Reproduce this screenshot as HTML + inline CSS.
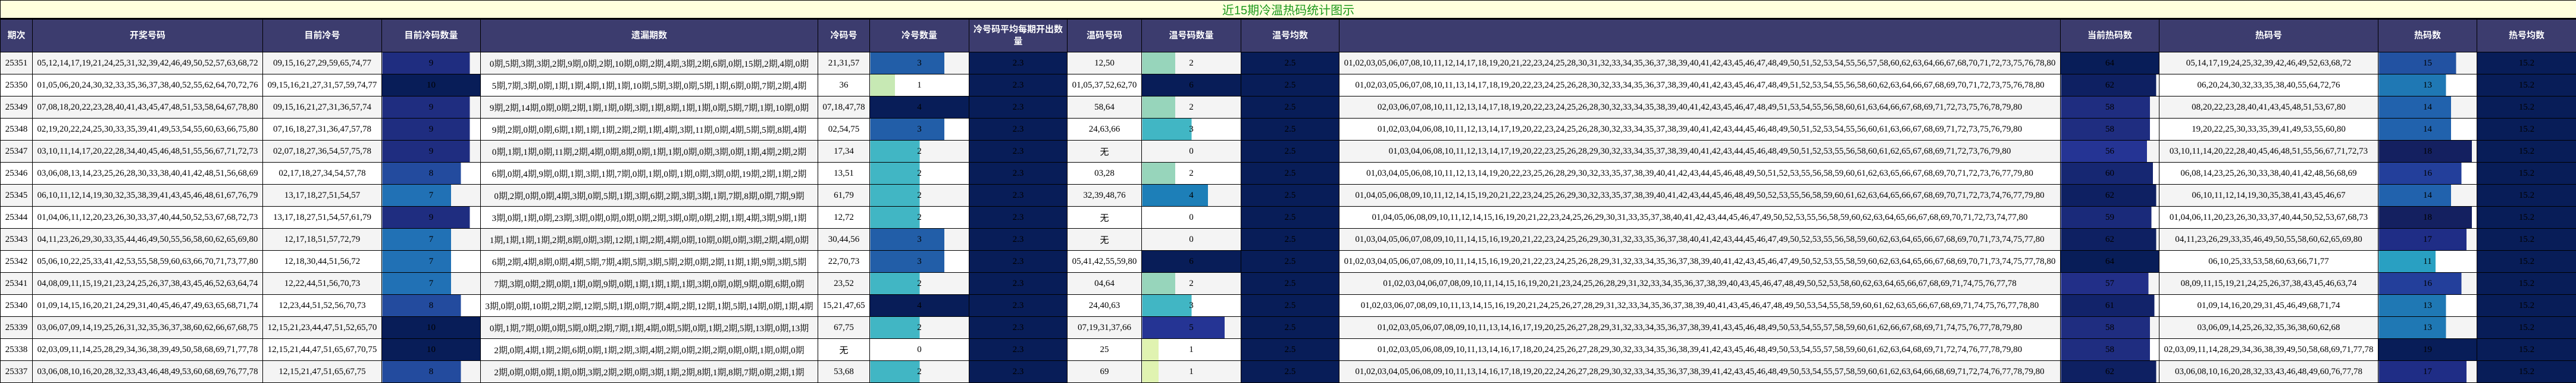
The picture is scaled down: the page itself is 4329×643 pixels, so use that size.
<!DOCTYPE html>
<html><head><meta charset="utf-8">
<style>
html,body{margin:0;padding:0;background:#fff;}
body{width:4329px;height:639px;overflow:hidden;}
table{border-collapse:collapse;table-layout:fixed;width:4329px;font-family:"Liberation Serif","Noto Serif CJK SC",serif;font-size:15px;color:#000;}
td,th{border:1px solid #000;padding:0;text-align:center;white-space:nowrap;overflow:hidden;}
tr.t td{height:25px;background:#ffffdd;color:#1e9a1e;font-size:20px;border-bottom:3px solid #000;font-family:"Liberation Sans","Noto Sans CJK SC",sans-serif;}
tr.h th{height:54px;background:#3c3c6e;color:#fff;font-family:"Liberation Sans","Noto Sans CJK SC",sans-serif;font-weight:bold;font-size:15px;white-space:normal;line-height:20px;}
tr.r td{height:36px;}
tr.o{background:#f4f4f4;}
tr.e{background:#fff;}
td.d{background:#081d58;}
</style></head><body>
<table>
<colgroup>
<col style="width:54px"><col style="width:387px"><col style="width:200px"><col style="width:166px"><col style="width:567px"><col style="width:87px"><col style="width:167px"><col style="width:165px"><col style="width:125px"><col style="width:167px"><col style="width:165px"><col style="width:1212px"><col style="width:166px"><col style="width:368px"><col style="width:166px"><col style="width:167px">
</colgroup>
<tr class="t"><td colspan="16">近15期冷温热码统计图示</td></tr>
<tr class="h"><th>期次</th><th>开奖号码</th><th>目前冷号</th><th>目前冷码数量</th><th>遗漏期数</th><th>冷码号</th><th>冷号数量</th><th>冷号码平均每期开出数量</th><th>温码号码</th><th>温号码数量</th><th>温号均数</th><th></th><th>当前热码数</th><th>热码号</th><th>热码数</th><th>热号均数</th></tr>

<tr class="r o"><td>25351</td><td>05,12,14,17,19,21,24,25,31,32,39,42,46,49,50,52,57,63,68,72</td><td>09,15,16,27,29,59,65,74,77</td><td style="background:linear-gradient(90deg,#1f2d80 89%,transparent 89%)">9</td><td>0期,5期,3期,3期,2期,9期,0期,2期,10期,0期,2期,4期,3期,2期,6期,0期,15期,2期,4期,0期</td><td>21,31,57</td><td style="background:linear-gradient(90deg,#225ea8 75%,transparent 75%)">3</td><td class="d">2.3</td><td>12,50</td><td style="background:linear-gradient(90deg,#97d5bb 33.3%,transparent 33.3%)">2</td><td class="d">2.5</td><td>01,02,03,05,06,07,08,10,11,12,14,17,18,19,20,21,22,23,24,25,28,30,31,32,33,34,35,36,37,38,39,40,41,42,43,45,46,47,48,49,50,51,52,53,54,55,56,57,58,60,62,63,64,66,67,68,70,71,72,73,75,76,78,80</td><td style="background:#081d58">64</td><td>05,14,17,19,24,25,32,39,42,46,49,52,63,68,72</td><td style="background:linear-gradient(90deg,#2252a2 78.9%,transparent 78.9%)">15</td><td class="d">15.2</td></tr>

<tr class="r e"><td>25350</td><td>01,05,06,20,24,30,32,33,35,36,37,38,40,52,55,62,64,70,72,76</td><td>09,15,16,21,27,31,57,59,74,77</td><td style="background:#081d58">10</td><td>5期,7期,3期,0期,1期,1期,4期,1期,1期,10期,5期,3期,0期,5期,1期,6期,0期,7期,2期,4期</td><td>36</td><td style="background:linear-gradient(90deg,#c7e9b4 25%,transparent 25%)">1</td><td class="d">2.3</td><td>01,05,37,52,62,70</td><td style="background:#081d58">6</td><td class="d">2.5</td><td>01,02,03,05,06,07,08,10,11,13,14,17,18,19,20,22,23,24,25,26,28,30,32,33,34,35,36,37,38,39,40,41,42,43,45,46,47,48,49,51,52,53,54,55,56,58,60,62,63,64,66,67,68,69,70,71,72,73,75,76,78,80</td><td style="background:linear-gradient(90deg,#0e2062 96.9%,transparent 96.9%)">62</td><td>06,20,24,30,32,33,35,38,40,55,64,72,76</td><td style="background:linear-gradient(90deg,#1f78b4 68.4%,transparent 68.4%)">13</td><td class="d">15.2</td></tr>

<tr class="r o"><td>25349</td><td>07,08,18,20,22,23,28,40,41,43,45,47,48,51,53,58,64,67,78,80</td><td>09,15,16,21,27,31,36,57,74</td><td style="background:linear-gradient(90deg,#1f2d80 89%,transparent 89%)">9</td><td>9期,2期,14期,0期,0期,2期,1期,1期,0期,3期,1期,8期,1期,1期,0期,5期,7期,1期,10期,0期</td><td>07,18,47,78</td><td style="background:#081d58">4</td><td class="d">2.3</td><td>58,64</td><td style="background:linear-gradient(90deg,#97d5bb 33.3%,transparent 33.3%)">2</td><td class="d">2.5</td><td>02,03,06,07,08,10,11,12,13,14,17,18,19,20,22,23,24,25,26,28,30,32,33,34,35,38,39,40,41,42,43,45,46,47,48,49,51,53,54,55,56,58,60,61,63,64,66,67,68,69,71,72,73,75,76,78,79,80</td><td style="background:linear-gradient(90deg,#1f2d80 90.6%,transparent 90.6%)">58</td><td>08,20,22,23,28,40,41,43,45,48,51,53,67,80</td><td style="background:linear-gradient(90deg,#2162ad 73.7%,transparent 73.7%)">14</td><td class="d">15.2</td></tr>

<tr class="r e"><td>25348</td><td>02,19,20,22,24,25,30,33,35,39,41,49,53,54,55,60,63,66,75,80</td><td>07,16,18,27,31,36,47,57,78</td><td style="background:linear-gradient(90deg,#1f2d80 89%,transparent 89%)">9</td><td>9期,2期,0期,0期,6期,1期,1期,1期,2期,2期,1期,4期,3期,11期,0期,4期,5期,5期,8期,4期</td><td>02,54,75</td><td style="background:linear-gradient(90deg,#225ea8 75%,transparent 75%)">3</td><td class="d">2.3</td><td>24,63,66</td><td style="background:linear-gradient(90deg,#41b6c4 50%,transparent 50%)">3</td><td class="d">2.5</td><td>01,02,03,04,06,08,10,11,12,13,14,17,19,20,22,23,24,25,26,28,30,32,33,34,35,37,38,39,40,41,42,43,44,45,46,48,49,50,51,52,53,54,55,56,60,61,63,66,67,68,69,71,72,73,75,76,79,80</td><td style="background:linear-gradient(90deg,#1f2d80 90.6%,transparent 90.6%)">58</td><td>19,20,22,25,30,33,35,39,41,49,53,55,60,80</td><td style="background:linear-gradient(90deg,#2162ad 73.7%,transparent 73.7%)">14</td><td class="d">15.2</td></tr>

<tr class="r o"><td>25347</td><td>03,10,11,14,17,20,22,28,34,40,45,46,48,51,55,56,67,71,72,73</td><td>02,07,18,27,36,54,57,75,78</td><td style="background:linear-gradient(90deg,#1f2d80 89%,transparent 89%)">9</td><td>0期,1期,1期,0期,11期,2期,4期,0期,8期,0期,1期,1期,0期,0期,3期,0期,1期,4期,2期,2期</td><td>17,34</td><td style="background:linear-gradient(90deg,#41b6c4 50%,transparent 50%)">2</td><td class="d">2.3</td><td style="font-family:'Noto Sans CJK SC',sans-serif">无</td><td>0</td><td class="d">2.5</td><td>01,03,04,06,08,10,11,12,13,14,17,19,20,22,23,25,26,28,29,30,32,33,34,35,37,38,39,40,41,42,43,44,45,46,48,49,50,51,52,53,55,56,58,60,61,62,65,67,68,69,71,72,73,76,79,80</td><td style="background:linear-gradient(90deg,#253494 87.5%,transparent 87.5%)">56</td><td>03,10,11,14,20,22,28,40,45,46,48,51,55,56,67,71,72,73</td><td style="background:linear-gradient(90deg,#142060 94.7%,transparent 94.7%)">18</td><td class="d">15.2</td></tr>

<tr class="r e"><td>25346</td><td>03,06,08,13,14,23,25,26,28,30,33,38,40,41,42,48,51,56,68,69</td><td>02,17,18,27,34,54,57,78</td><td style="background:linear-gradient(90deg,#234b9e 80%,transparent 80%)">8</td><td>6期,0期,4期,9期,0期,1期,3期,1期,7期,0期,1期,0期,1期,0期,3期,0期,19期,2期,1期,2期</td><td>13,51</td><td style="background:linear-gradient(90deg,#41b6c4 50%,transparent 50%)">2</td><td class="d">2.3</td><td>03,28</td><td style="background:linear-gradient(90deg,#97d5bb 33.3%,transparent 33.3%)">2</td><td class="d">2.5</td><td>01,03,04,05,06,08,10,11,12,13,14,19,20,22,23,25,26,28,29,30,32,33,35,37,38,39,40,41,42,43,44,45,46,48,49,50,51,52,53,55,56,58,59,60,61,62,63,65,66,67,68,69,70,71,72,73,76,77,79,80</td><td style="background:linear-gradient(90deg,#162772 93.75%,transparent 93.75%)">60</td><td>06,08,14,23,25,26,30,33,38,40,41,42,48,56,68,69</td><td style="background:linear-gradient(90deg,#233f9b 84.2%,transparent 84.2%)">16</td><td class="d">15.2</td></tr>

<tr class="r o"><td>25345</td><td>06,10,11,12,14,19,30,32,35,38,39,41,43,45,46,48,61,67,76,79</td><td>13,17,18,27,51,54,57</td><td style="background:linear-gradient(90deg,#2171b5 70%,transparent 70%)">7</td><td>0期,2期,0期,0期,4期,3期,0期,5期,1期,3期,6期,2期,3期,3期,1期,7期,8期,0期,7期,9期</td><td>61,79</td><td style="background:linear-gradient(90deg,#41b6c4 50%,transparent 50%)">2</td><td class="d">2.3</td><td>32,39,48,76</td><td style="background:linear-gradient(90deg,#1d7fb8 66.7%,transparent 66.7%)">4</td><td class="d">2.5</td><td>01,04,05,06,08,09,10,11,12,14,15,19,20,21,22,23,24,25,26,29,30,32,33,35,37,38,39,40,41,42,43,44,45,46,48,49,50,52,53,55,56,58,59,60,61,62,63,64,65,66,67,68,69,70,71,72,73,74,76,77,79,80</td><td style="background:linear-gradient(90deg,#0e2062 96.9%,transparent 96.9%)">62</td><td>06,10,11,12,14,19,30,35,38,41,43,45,46,67</td><td style="background:linear-gradient(90deg,#2162ad 73.7%,transparent 73.7%)">14</td><td class="d">15.2</td></tr>

<tr class="r e"><td>25344</td><td>01,04,06,11,12,20,23,26,30,33,37,40,44,50,52,53,67,68,72,73</td><td>13,17,18,27,51,54,57,61,79</td><td style="background:linear-gradient(90deg,#1f2d80 89%,transparent 89%)">9</td><td>3期,0期,1期,0期,23期,3期,0期,0期,0期,0期,2期,3期,0期,0期,2期,1期,4期,3期,9期,1期</td><td>12,72</td><td style="background:linear-gradient(90deg,#41b6c4 50%,transparent 50%)">2</td><td class="d">2.3</td><td style="font-family:'Noto Sans CJK SC',sans-serif">无</td><td>0</td><td class="d">2.5</td><td>01,04,05,06,08,09,10,11,12,14,15,16,19,20,21,22,23,24,25,26,29,30,31,33,35,37,38,40,41,42,43,44,45,46,47,49,50,52,53,55,56,58,59,60,62,63,64,65,66,67,68,69,70,71,72,73,74,77,80</td><td style="background:linear-gradient(90deg,#1a2a7a 92.2%,transparent 92.2%)">59</td><td>01,04,06,11,20,23,26,30,33,37,40,44,50,52,53,67,68,73</td><td style="background:linear-gradient(90deg,#142060 94.7%,transparent 94.7%)">18</td><td class="d">15.2</td></tr>

<tr class="r o"><td>25343</td><td>04,11,23,26,29,30,33,35,44,46,49,50,55,56,58,60,62,65,69,80</td><td>12,17,18,51,57,72,79</td><td style="background:linear-gradient(90deg,#2171b5 70%,transparent 70%)">7</td><td>1期,1期,1期,1期,2期,8期,0期,3期,12期,1期,2期,4期,0期,10期,0期,0期,3期,2期,4期,0期</td><td>30,44,56</td><td style="background:linear-gradient(90deg,#225ea8 75%,transparent 75%)">3</td><td class="d">2.3</td><td style="font-family:'Noto Sans CJK SC',sans-serif">无</td><td>0</td><td class="d">2.5</td><td>01,03,04,05,06,07,08,09,10,11,14,15,16,19,20,21,22,23,24,25,26,29,30,31,32,33,35,36,37,38,40,41,42,43,44,45,46,47,49,50,52,53,55,56,58,59,60,62,63,64,65,66,67,68,69,70,71,73,74,75,77,80</td><td style="background:linear-gradient(90deg,#0e2062 96.9%,transparent 96.9%)">62</td><td>04,11,23,26,29,33,35,46,49,50,55,58,60,62,65,69,80</td><td style="background:linear-gradient(90deg,#1f2d86 89.5%,transparent 89.5%)">17</td><td class="d">15.2</td></tr>

<tr class="r e"><td>25342</td><td>05,06,10,22,25,33,41,42,53,55,58,59,60,63,66,70,71,73,77,80</td><td>12,18,30,44,51,56,72</td><td style="background:linear-gradient(90deg,#2171b5 70%,transparent 70%)">7</td><td>6期,2期,4期,8期,0期,4期,5期,7期,4期,5期,3期,5期,2期,0期,2期,11期,1期,9期,3期,5期</td><td>22,70,73</td><td style="background:linear-gradient(90deg,#225ea8 75%,transparent 75%)">3</td><td class="d">2.3</td><td>05,41,42,55,59,80</td><td style="background:#081d58">6</td><td class="d">2.5</td><td>01,02,03,04,05,06,07,08,09,10,11,14,15,16,19,20,21,22,23,24,25,26,28,29,31,32,33,34,35,36,37,38,39,40,41,42,43,45,46,47,49,50,52,53,55,58,59,60,62,63,64,65,66,67,68,69,70,71,73,74,75,77,78,80</td><td style="background:#081d58">64</td><td>06,10,25,33,53,58,60,63,66,71,77</td><td style="background:linear-gradient(90deg,#29a0c2 57.9%,transparent 57.9%)">11</td><td class="d">15.2</td></tr>

<tr class="r o"><td>25341</td><td>04,08,09,11,15,19,21,23,24,25,26,37,38,43,45,46,52,63,64,74</td><td>12,22,44,51,56,70,73</td><td style="background:linear-gradient(90deg,#2171b5 70%,transparent 70%)">7</td><td>7期,3期,0期,2期,0期,1期,0期,9期,0期,1期,1期,1期,1期,3期,0期,0期,9期,0期,6期,0期</td><td>23,52</td><td style="background:linear-gradient(90deg,#41b6c4 50%,transparent 50%)">2</td><td class="d">2.3</td><td>04,64</td><td style="background:linear-gradient(90deg,#97d5bb 33.3%,transparent 33.3%)">2</td><td class="d">2.5</td><td>01,02,03,04,06,07,08,09,10,11,14,15,16,19,20,21,23,24,25,26,28,29,31,32,33,34,35,36,37,38,39,40,43,45,46,47,48,49,50,52,53,58,60,62,63,64,65,66,67,68,69,71,74,75,76,77,78</td><td style="background:linear-gradient(90deg,#222f88 89%,transparent 89%)">57</td><td>08,09,11,15,19,21,24,25,26,37,38,43,45,46,63,74</td><td style="background:linear-gradient(90deg,#233f9b 84.2%,transparent 84.2%)">16</td><td class="d">15.2</td></tr>

<tr class="r e"><td>25340</td><td>01,09,14,15,16,20,21,24,29,31,40,45,46,47,49,63,65,68,71,74</td><td>12,23,44,51,52,56,70,73</td><td style="background:linear-gradient(90deg,#234b9e 80%,transparent 80%)">8</td><td>3期,0期,0期,10期,2期,2期,12期,5期,1期,0期,7期,4期,2期,12期,1期,5期,14期,0期,1期,4期</td><td>15,21,47,65</td><td style="background:#081d58">4</td><td class="d">2.3</td><td>24,40,63</td><td style="background:linear-gradient(90deg,#41b6c4 50%,transparent 50%)">3</td><td class="d">2.5</td><td>01,02,03,06,07,08,09,10,11,13,14,15,16,19,20,21,24,25,26,27,28,29,31,32,33,34,35,36,37,38,39,40,41,43,45,46,47,48,49,50,53,54,55,58,59,60,61,62,63,65,66,67,68,69,71,74,75,76,77,78,80</td><td style="background:linear-gradient(90deg,#12236a 95.3%,transparent 95.3%)">61</td><td>01,09,14,16,20,29,31,45,46,49,68,71,74</td><td style="background:linear-gradient(90deg,#1f78b4 68.4%,transparent 68.4%)">13</td><td class="d">15.2</td></tr>

<tr class="r o"><td>25339</td><td>03,06,07,09,14,19,25,26,31,32,35,36,37,38,60,62,66,67,68,75</td><td>12,15,21,23,44,47,51,52,65,70</td><td style="background:#081d58">10</td><td>0期,1期,7期,0期,0期,5期,0期,2期,7期,1期,4期,0期,5期,0期,1期,2期,5期,13期,0期,13期</td><td>67,75</td><td style="background:linear-gradient(90deg,#41b6c4 50%,transparent 50%)">2</td><td class="d">2.3</td><td>07,19,31,37,66</td><td style="background:linear-gradient(90deg,#253494 83.3%,transparent 83.3%)">5</td><td class="d">2.5</td><td>01,02,03,05,06,07,08,09,10,11,13,14,16,17,19,20,25,26,27,28,29,31,32,33,34,35,36,37,38,39,41,43,45,46,48,49,50,53,54,55,57,58,59,60,61,62,66,67,68,69,71,74,75,76,77,78,79,80</td><td style="background:linear-gradient(90deg,#1f2d80 90.6%,transparent 90.6%)">58</td><td>03,06,09,14,25,26,32,35,36,38,60,62,68</td><td style="background:linear-gradient(90deg,#1f78b4 68.4%,transparent 68.4%)">13</td><td class="d">15.2</td></tr>

<tr class="r e"><td>25338</td><td>02,03,09,11,14,25,28,29,34,36,38,39,49,50,58,68,69,71,77,78</td><td>12,15,21,44,47,51,65,67,70,75</td><td style="background:#081d58">10</td><td>2期,0期,4期,1期,2期,6期,0期,1期,2期,3期,4期,2期,0期,2期,2期,0期,0期,1期,0期,0期</td><td style="font-family:'Noto Sans CJK SC',sans-serif">无</td><td>0</td><td class="d">2.3</td><td>25</td><td style="background:linear-gradient(90deg,#e0f3b1 16.7%,transparent 16.7%)">1</td><td class="d">2.5</td><td>01,02,03,05,06,08,09,10,11,13,14,16,17,18,20,24,25,26,27,28,29,30,32,33,34,35,36,38,39,41,42,43,45,46,48,49,50,53,54,55,57,58,59,60,61,62,63,64,68,69,71,72,74,76,77,78,79,80</td><td style="background:linear-gradient(90deg,#1f2d80 90.6%,transparent 90.6%)">58</td><td>02,03,09,11,14,28,29,34,36,38,39,49,50,58,68,69,71,77,78</td><td style="background:#081d58">19</td><td class="d">15.2</td></tr>

<tr class="r o"><td>25337</td><td>03,06,08,10,16,20,28,32,33,43,46,48,49,53,60,68,69,76,77,78</td><td>12,15,21,47,51,65,67,75</td><td style="background:linear-gradient(90deg,#234b9e 80%,transparent 80%)">8</td><td>2期,0期,0期,0期,1期,0期,3期,2期,2期,0期,3期,1期,2期,8期,1期,8期,7期,0期,2期,1期</td><td>53,68</td><td style="background:linear-gradient(90deg,#41b6c4 50%,transparent 50%)">2</td><td class="d">2.3</td><td>69</td><td style="background:linear-gradient(90deg,#e0f3b1 16.7%,transparent 16.7%)">1</td><td class="d">2.5</td><td>01,02,03,04,05,06,08,09,10,11,13,14,16,17,18,19,20,22,24,26,27,28,29,30,32,33,34,35,36,37,38,39,41,42,43,45,46,48,49,50,53,54,55,57,58,59,60,61,62,63,64,66,68,69,71,72,74,76,77,78,79,80</td><td style="background:linear-gradient(90deg,#0e2062 96.9%,transparent 96.9%)">62</td><td>03,06,08,10,16,20,28,32,33,43,46,48,49,60,76,77,78</td><td style="background:linear-gradient(90deg,#1f2d86 89.5%,transparent 89.5%)">17</td><td class="d">15.2</td></tr>
</table>
</body></html>
